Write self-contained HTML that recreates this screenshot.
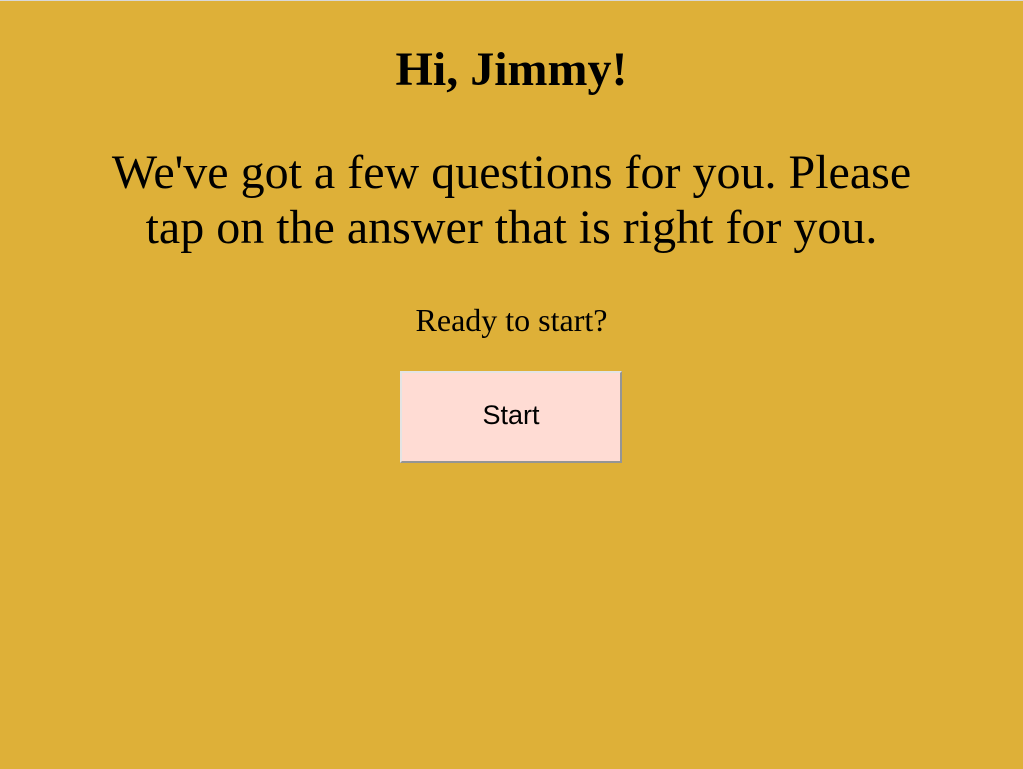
<!DOCTYPE html>
<html><head><style>
html,body{margin:0;padding:0;}
body{width:1023px;height:769px;background:#deb038;border-top:1px solid #d8d8d8;box-sizing:border-box;position:relative;overflow:hidden;font-family:"Liberation Serif",serif;color:#000;}
.t{position:absolute;left:0;width:1023px;text-align:center;margin:0;}
h1{font-size:48px;line-height:55px;top:41px;font-weight:bold;}
p.q{font-size:48px;line-height:55px;top:144px;}
p.r{font-size:32px;line-height:36px;top:301px;}
button{position:absolute;left:400px;top:370px;width:222px;height:92px;background:#ffdcd4;border:2px solid;border-color:#e4e4e4 #959595 #959595 #e4e4e4;font-family:"Liberation Sans",sans-serif;font-size:27px;color:#000;padding:0 0 3px 0;}
</style></head><body>
<h1 class="t">Hi, Jimmy!</h1>
<p class="t q">We've got a few questions for you. Please<br>tap on the answer that is right for you.</p>
<p class="t r">Ready to start?</p>
<button>Start</button>
</body></html>
